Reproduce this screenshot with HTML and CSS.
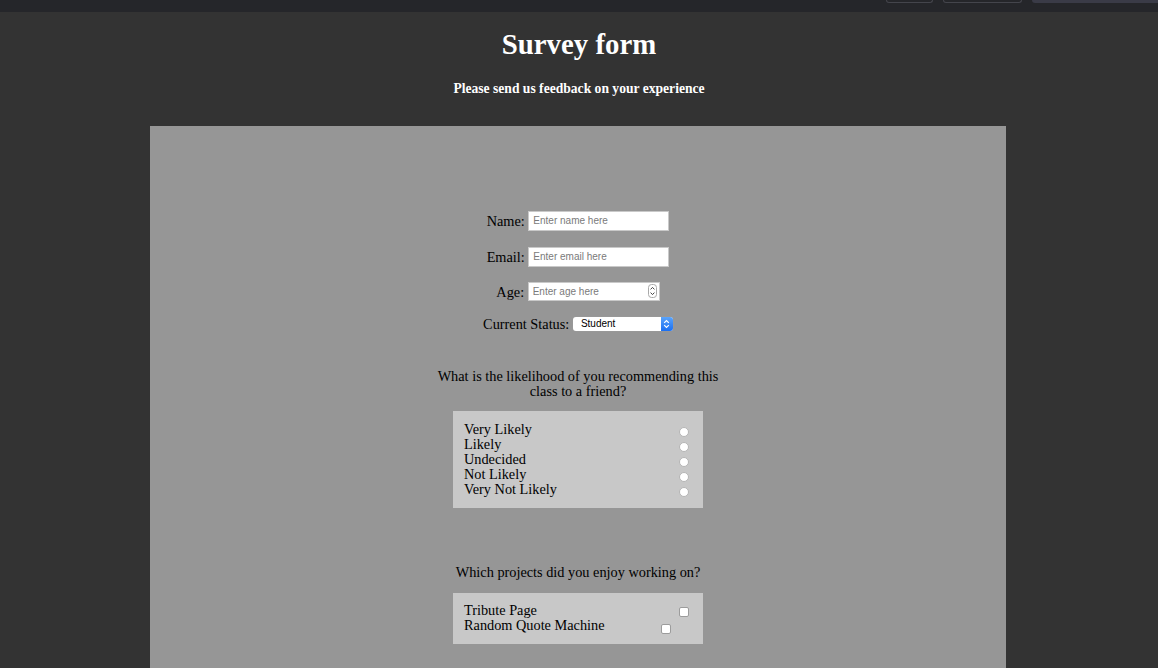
FILE: index.html
```html
<!DOCTYPE html>
<html>
<head>
<meta charset="utf-8">
<title>Survey form</title>
<link rel="stylesheet" href="styles.css">
</head>
<body>
<div class="topbar">
  <span class="tb-btn tb-a"></span>
  <span class="tb-btn tb-b"></span>
  <span class="tb-fill"></span>
</div>
<header class="header">
  <h1 class="title">Survey form</h1>
  <p class="subtitle">Please send us feedback on your experience</p>
</header>
<form class="survey">
  <div class="row row-name"><label class="lbl">Name:</label> <input class="field" type="text" placeholder="Enter name here"></div>
  <div class="row row-email"><label class="lbl">Email:</label> <input class="field" type="text" placeholder="Enter email here"></div>
  <div class="row row-age"><label class="lbl">Age:</label> <span class="age-wrap"><input class="field field-age" type="text" placeholder="Enter age here"><svg class="spin" width="9" height="14" viewBox="0 0 9 14"><rect x="0.5" y="0.5" width="8" height="13" rx="3" fill="#fff" stroke="#a9a9a9"/><path d="M2.6 5.4 L4.5 3.4 L6.4 5.4" fill="none" stroke="#444" stroke-width="1"/><path d="M2.6 8.6 L4.5 10.6 L6.4 8.6" fill="none" stroke="#444" stroke-width="1"/></svg></span></div>
  <div class="row row-status"><label class="lbl">Current Status:</label> <span class="sel"><span class="sel-text">Student</span><span class="sel-arrow"><svg width="9" height="12" viewBox="0 0 9 12"><path d="M2.2 4.8 L4.5 2.5 L6.8 4.8" fill="none" stroke="#fff" stroke-width="1.2"/><path d="M2.2 7.2 L4.5 9.5 L6.8 7.2" fill="none" stroke="#fff" stroke-width="1.2"/></svg></span></span></div>

  <p class="question q1">What is the likelihood of you recommending this class to a friend?</p>
  <div class="box box-radio">
    <div class="opt"><span>Very Likely</span><input class="radio" type="radio" name="rec"></div>
    <div class="opt"><span>Likely</span><input class="radio" type="radio" name="rec"></div>
    <div class="opt"><span>Undecided</span><input class="radio" type="radio" name="rec"></div>
    <div class="opt"><span>Not Likely</span><input class="radio" type="radio" name="rec"></div>
    <div class="opt"><span>Very Not Likely</span><input class="radio" type="radio" name="rec"></div>
  </div>

  <p class="question q2">Which projects did you enjoy working on?</p>
  <div class="box box-check">
    <div class="opt"><span>Tribute Page</span><input class="check check-1" type="checkbox"></div>
    <div class="opt"><span>Random Quote Machine</span><input class="check check-2" type="checkbox"></div>
  </div>
</form>
</body>
</html>
```
FILE: styles.css
```css
html, body {
  margin: 0;
  padding: 0;
}
body {
  background: #333333;
  font-family: "Liberation Serif", "Times New Roman", serif;
  font-size: 14.3px;
  color: #000;
  height: 668px;
  overflow: hidden;
}
.topbar {
  height: 12px;
  background: #25262a;
  display: flex;
  justify-content: flex-end;
  align-items: flex-start;
}
.tb-btn {
  display: block;
  height: 2px;
  border: 1px solid #44454c;
  border-top: none;
  border-radius: 0 0 4px 4px;
}
.tb-a { width: 45px; margin-right: 10px; }
.tb-b { width: 77px; margin-right: 10px; }
.tb-fill {
  display: block;
  width: 126px;
  height: 3px;
  background: #3a3b47;
  border-radius: 0 0 0 4px;
}
.header {
  text-align: center;
  color: #fff;
}
.title {
  margin: 16px 0 0;
  font-size: 28.8px;
  line-height: 32px;
  font-weight: bold;
}
.subtitle {
  margin: 20px 0 0;
  font-size: 13.6px;
  line-height: 18px;
  font-weight: bold;
}
.survey {
  margin: 28px 0 0 150px;
  width: 856px;
  height: 560px;
  background: #969696;
  padding-top: 83px;
  box-sizing: border-box;
  text-align: center;
}
.row {
  height: 20px;
  line-height: 20px;
  white-space: nowrap;
}
.row-email { margin-top: 16px; }
.row-age { margin-top: 15px; }
.row-status { margin-top: 12px; }
.lbl {
  vertical-align: middle;
}
.field {
  box-sizing: border-box;
  width: 141px;
  height: 20px;
  border: 1px solid #c9c9c9;
  background: #fff;
  padding: 0 4px;
  margin: 0;
  font-family: "Liberation Sans", Arial, sans-serif;
  font-size: 10px;
  vertical-align: middle;
  outline: none;
}
.field::placeholder {
  color: #7a7a7a;
}
.age-wrap {
  position: relative;
  display: inline-block;
  vertical-align: middle;
  height: 20px;
}
.field-age {
  width: 132px;
  height: 19px;
  vertical-align: top;
}
.spin {
  position: absolute;
  right: 3px;
  top: 2px;
}
.sel {
  display: inline-flex;
  vertical-align: middle;
  box-sizing: border-box;
  width: 100px;
  height: 14px;
  background: #fff;
  border-radius: 3px;
  box-shadow: 0 0 0 0.5px #9a9a9a;
  overflow: hidden;
  text-align: left;
}
.sel-text {
  flex: 1;
  font-family: "Liberation Sans", Arial, sans-serif;
  font-size: 10px;
  line-height: 14px;
  padding-left: 8px;
  color: #000;
}
.sel-arrow {
  width: 12px;
  height: 14px;
  background: linear-gradient(#5aa4fb, #1a6ff2);
  display: flex;
  align-items: center;
  justify-content: center;
}
.question {
  width: 295px;
  margin: 0 auto;
  line-height: 15px;
}
.q1 { margin-top: 37px; }
.q2 { margin-top: 57px; }
.box {
  width: 250px;
  margin: 0 auto;
  background: #c8c8c8;
  box-sizing: border-box;
  text-align: left;
  line-height: 15px;
}
.box-radio {
  margin-top: 12px;
  padding: 11px 14px 11px 11px;
}
.box-check {
  margin-top: 13px;
  padding: 10px 14px 11px 11px;
}
.opt {
  display: flex;
  justify-content: space-between;
  align-items: center;
  height: 15px;
}
.radio {
  appearance: none;
  -webkit-appearance: none;
  width: 10px;
  height: 10px;
  margin: 4px 0 0;
  border-radius: 50%;
  background: #fff;
  border: 0.5px solid #b5b5b5;
  box-sizing: border-box;
}
.check {
  appearance: none;
  -webkit-appearance: none;
  width: 10px;
  height: 10px;
  margin: 0;
  border-radius: 2px;
  background: #fff;
  border: 0.5px solid #9c9c9c;
  box-sizing: border-box;
}
.check-1 { margin-top: 3px; }
.check-2 { margin-top: 7px; margin-right: 18px; }
```
